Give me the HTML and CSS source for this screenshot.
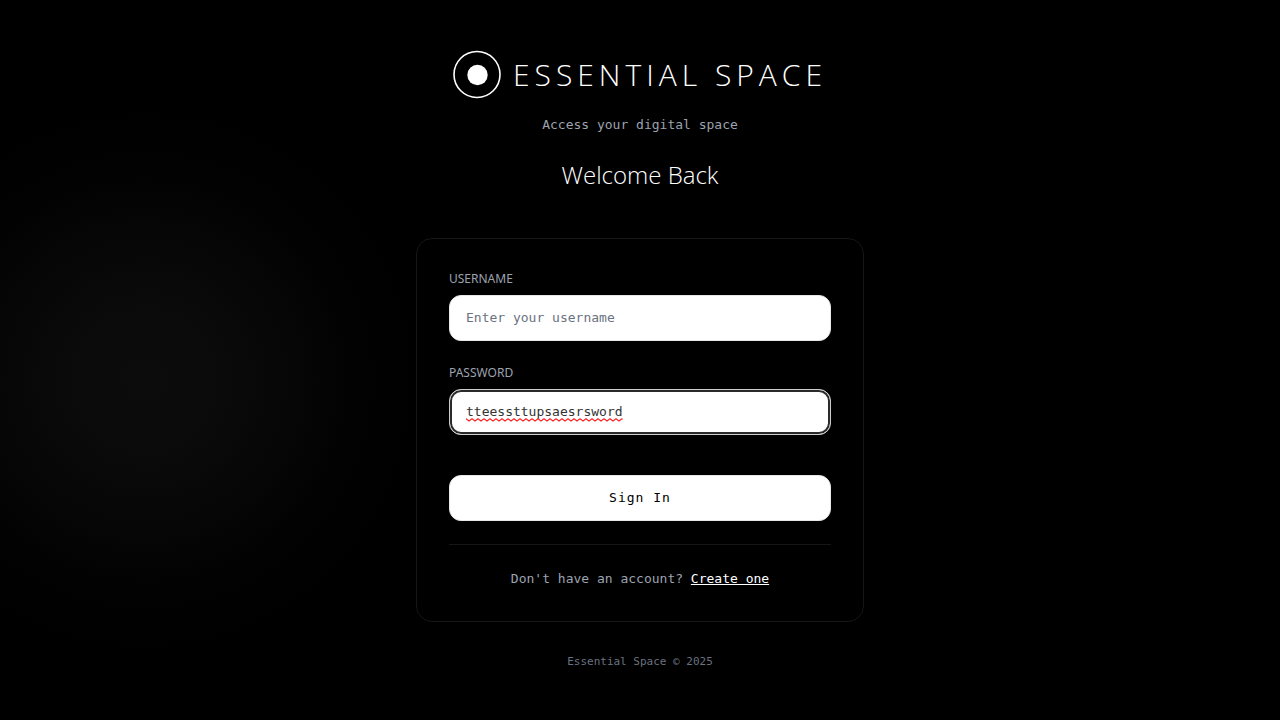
FILE: index.html
```html
<!DOCTYPE html>
<html lang="en">
<head>
<meta charset="utf-8">
<meta name="viewport" content="width=device-width, initial-scale=1">
<title>Essential Space</title>
<link rel="stylesheet" href="styles.css">
</head>
<body class="page">
<main class="auth">
  <header class="brand">
    <div class="brand-row">
      <svg class="logo" viewBox="0 0 48 48" aria-hidden="true">
        <circle cx="24" cy="23.5" r="23" fill="none" stroke="#fff" stroke-width="1.6"/>
        <circle cx="24.5" cy="24" r="10.2" fill="#fff"/>
      </svg>
      <h1 class="brand-name">ESSENTIAL SPACE</h1>
    </div>
    <p class="tagline">Access your digital space</p>
    <h2 class="welcome">Welcome Back</h2>
  </header>
  <section class="card">
    <form class="form">
      <div class="field">
        <label class="label" for="username">USERNAME</label>
        <input class="input" id="username" type="text" placeholder="Enter your username">
      </div>
      <div class="field">
        <label class="label" for="password">PASSWORD</label>
        <div class="input-wrap">
          <input class="input input-active" id="password" type="text" value="tteessttupsaesrsword" spellcheck="false">
          <svg class="squiggle" aria-hidden="true">
            <defs>
              <pattern id="wave" width="6" height="4" patternUnits="userSpaceOnUse">
                <path d="M-1 0 L0 .7 L3 3 L6 .7 L7 0" fill="none" stroke="#f22" stroke-width="1.1"/>
              </pattern>
            </defs>
            <rect width="100%" height="4" fill="url(#wave)"/>
          </svg>
        </div>
      </div>
      <button class="submit" type="submit">Sign In</button>
    </form>
    <p class="switch">Don't have an account? <a class="link" href="#">Create one</a></p>
  </section>
  <footer class="footer">Essential Space © 2025</footer>
</main>
</body>
</html>
```

FILE: styles.css
```css
* {
  box-sizing: border-box;
  margin: 0;
}

.page {
  min-height: 100vh;
  display: flex;
  align-items: center;
  justify-content: center;
  background: radial-gradient(circle 270px at 145px 380px, #0c0c0c 0%, #0a0a0a 30%, #060606 55%, #020202 78%, #000 100%) #000;
  color: #fff;
  font-family: "DejaVu Sans Mono", monospace;
  font-size: 13px;
  line-height: 20px;
}

.auth {
  width: 100%;
  max-width: 448px;
}

.brand {
  display: flex;
  flex-direction: column;
  align-items: center;
  margin-bottom: 47px;
}

.brand-row {
  display: flex;
  align-items: center;
  gap: 12px;
  margin-bottom: 16px;
}

.logo {
  flex: none;
  width: 48px;
  height: 48px;
  overflow: visible;
}

.brand-name,
.welcome {
  font-family: "Open Sans", sans-serif;
  font-weight: 300;
  white-space: nowrap;
}

.brand-name {
  font-size: 30px;
  line-height: 36px;
  letter-spacing: 5px;
}

.tagline {
  color: #9ca3af;
  margin-bottom: 24px;
}

.welcome {
  font-size: 24px;
  line-height: 32px;
}

.card {
  padding: 32px;
  border: 1px solid #161616;
  border-radius: 16px;
  background: #000;
}

.form {
  display: flex;
  flex-direction: column;
  gap: 24px;
}

.field {
  display: flex;
  flex-direction: column;
  gap: 8px;
}

.label {
  font-family: "Noto Sans", sans-serif;
  font-size: 12px;
  line-height: 16px;
  color: #9ca3af;
}

.input-wrap {
  position: relative;
  display: flex;
}

.input {
  width: 100%;
  height: 46px;
  padding: 0 16px;
  border: 1px solid #e5e7eb;
  border-radius: 12px;
  background: #fff;
  color: #333;
  font: inherit;
}

.input::placeholder {
  color: #6b7280;
  opacity: 1;
}

.input-active {
  border-color: #ccc;
  box-shadow: inset 0 0 0 2px #2a2a2a;
}

.squiggle {
  position: absolute;
  left: 17px;
  bottom: 13px;
  width: 20ch;
  height: 4px;
}

.submit {
  height: 46px;
  margin-top: 16px;
  border: 1px solid #e5e7eb;
  border-radius: 12px;
  background: #fff;
  color: #000;
  font: inherit;
  letter-spacing: 1px;
}

.switch {
  margin-top: 23px;
  padding-top: 24px;
  border-top: 1px solid #161616;
  text-align: center;
  color: #9ca3af;
}

.link {
  color: #fff;
  text-underline-offset: 1px;
}

.footer {
  margin-top: 32px;
  text-align: center;
  font-size: 11px;
  line-height: 16px;
  color: #6b7280;
}
```
